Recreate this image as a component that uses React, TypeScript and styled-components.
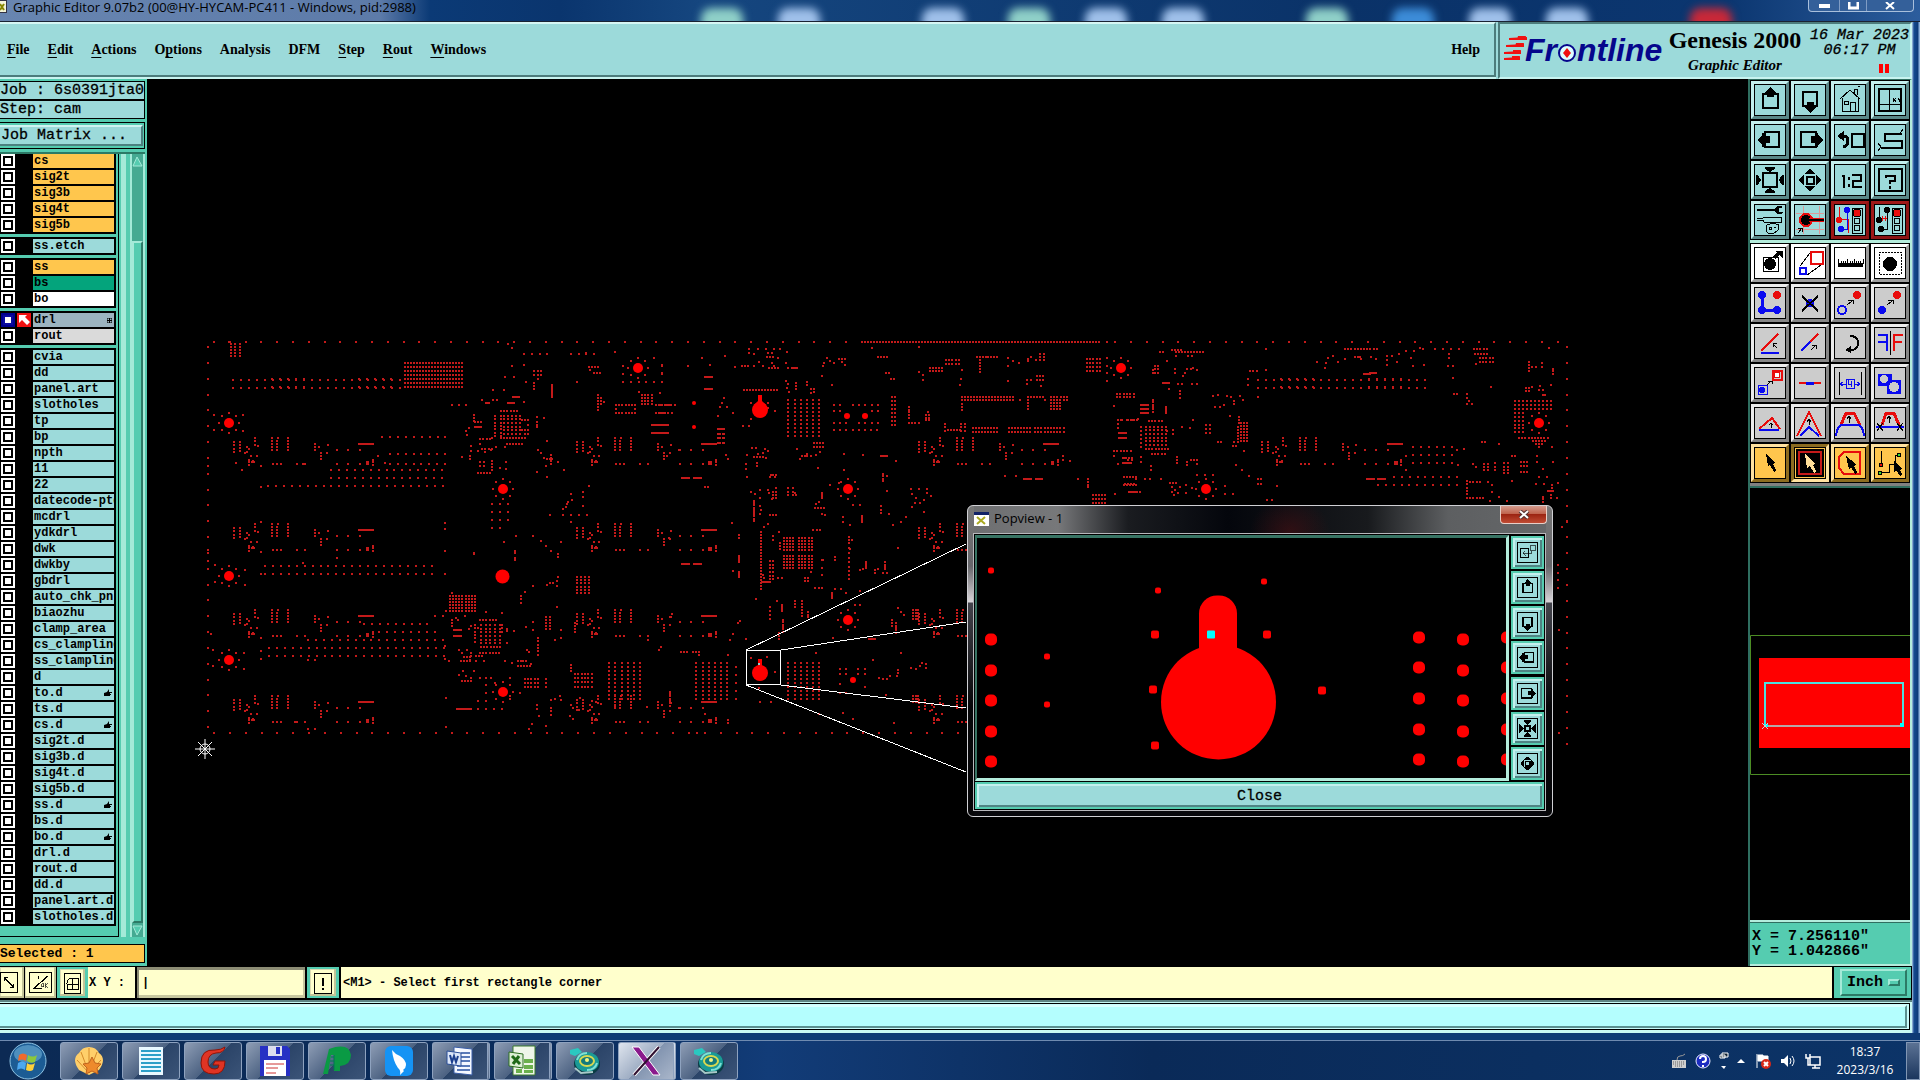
import React from 'react';
import styled, { createGlobalStyle, css } from 'styled-components';

const mono = '"Liberation Mono", "DejaVu Sans Mono", monospace';
const serif = '"Liberation Serif", "DejaVu Serif", serif';
const sans = '"Open Sans", "Noto Sans", sans-serif';

const aqua = '#9cdada';
const teal = '#55ccb0';
const amber = '#ffc64d';
const cream = '#ffffcc';
const grey = '#cccccc';

const Global = createGlobalStyle`
  * { box-sizing: border-box; }
  body { margin: 0; background: #0a3468; overflow: hidden; }
  button, input, select { font: inherit; color: inherit; margin: 0; padding: 0; border: 0; border-radius: 0; }
  svg { display: block; }
`;

/* ---------- drill data ---------- */

/* Each entry is "x,y" for one hit or "x,y,columns,rows,dx,dy" for an array. */
const EDGE = `72,36,41,1,47.4,0 2016,36,80,1,9,0 2751,36 2775,36 2823,36,28,1,47.4,0 54,51,1,25,0,47.5
54,408 54,432 54,660 54,692 72,1209,60,1,47.5,0 4131,51,1,26,0,47.6 4131,573 4116,591 4104,705,1,4,0,23 4107,900 4107,1209`;

const LEFT = `123,42,3,5,13,9 117,36 645,99,20,7,9,12 129,150,22,2,23.8,24 247,147,5,2,24,24 508,147,5,2,24,24 786,225,3,1,21,0
576,321,9,1,23.8,0 585,399 600,372,8,1,23.6,0 600,402,8,1,23.6,0 423,420,15,2,23.8,24 213,470 234,468,23,1,23.8,0
765,579 765,596 765,663 765,732 225,708,22,1,23.8,0 213,732 225,732,22,1,23.8,0 339,699 213,576 213,666 213,408
780,798,9,6,9.3,9 786,790 522,882,9,1,23.8,0 567,906,8,1,23.8,0 354,930,18,1,23.8,0 237,954,23,2,23.8,24
735,858 759,858 213,963 213,987 354,990 375,990 63,912 765,948 765,987 777,993 768,1104 768,1191 213,924
933,243,6,1,9.5,0 915,258,1,7,0,10 933,258,1,7,0,10 942,257,5,6,12,11 933,324,9,1,9,0 951,342,6,1,9,0 996,270,3,1,9,0 1014,285 996,300,3,1,9,0 1005,312,2,1,9,0
852,255,1,3,0,9 855,276,3,1,9,0 855,291,4,1,6,0 876,210 888,218,3,1,5,0 909,210 921,210 909,180 942,180 969,201,4,1,6,0 954,218,4,1,6,0 1002,216
945,141 972,141 966,108 1002,105 954,42 972,36 966,54 1003,72,4,1,23,0 1143,72,4,1,23,0 1188,70 1275,66 1161,156 1033,123,3,2,10,11 1033,159,1,3,0,9 1008,156 1045,147 1086,165,1,7,0,6
1197,111,4,1,9,0 1200,120 1212,129,3,1,9,0 1299,108,1,3,0,24 1323,156,5,1,23,0 1416,108,1,2,0,24 1392,84
1224,195,1,6,0,9 1233,204,1,3,0,9 1242,216 1278,225,7,1,9.5,0 1278,249,7,1,9.5,0 1278,237 1335,237 1356,195,4,4,9.5,9 1347,186 1410,188
1398,225,6,1,9,0 1398,249,4,1,9,0 1386,285,9,1,6,0 1386,309,9,1,6,0 1041,261 1062,264 1041,276,1,3,0,8 837,294 828,303 830,315
870,327,4,1,10,0 906,324 870,342 843,348,1,2,0,14 840,378,1,2,0,10 816,381 864,363 876,357,4,1,10,0 885,366 903,360 918,351 945,350 960,342
870,396,2,2,12,12 906,393,1,4,0,9 864,429,5,1,9,0 948,396 930,414 948,417 1071,333 1044,360 1053,369 1062,384 1071,387,3,1,8,0 1083,375,1,4,0,9 1104,396 1122,420 1041,426 1071,441 1068,408
906,522,3,3,24,24 906,594 930,594 1197,468 1179,486 1179,501 1179,528 1143,492 1146,510 1134,516 1131,522 1128,531 1119,537 1119,555,4,1,24,0 1080,555 1143,576
978,618 1029,618 942,636 1053,633 1068,648 1083,663 1104,672 1104,681 1113,636 852,672 852,668 975,663,1,2,0,6 975,684,1,2,0,6 1161,741,4,6,12,9.6
1029,768 1005,786 993,798,1,3,0,10 1071,765 1080,759 1089,759 1101,768 1104,741 1101,754 1101,831
870,870,6,1,9.5,0 855,885,1,6,0,10 864,894 873,885,5,6,14,11 873,951,7,1,9.5,0 870,969,7,1,9.5,0 936,885,1,3,0,10 951,897 951,903 972,903 843,888 837,897 951,939
792,900,5,2,5,18 786,870,1,3,0,9 804,870 825,858 798,864 888,846 936,849 768,843 807,960 831,960 816,970 822,980,3,1,9,0 813,993,4,1,9,0 843,970,1,2,0,9 858,978,3,1,9,0
840,990 858,993 882,993 945,993 966,999 1011,960 1017,966 984,993,4,1,8,0 984,1008,5,1,9,0 1023,1002 852,1023 819,1023 807,1035 828,1038 816,1052,4,1,9,0 843,1044 870,1044,3,1,17,0 960,1044 915,1059
1008,891 1029,876 1029,900 1068,861,2,5,12,9 1044,924,1,6,0,10 1095,930 1113,900 1113,924 1155,879,1,4,0,9 1005,1047,5,3,9.5,12 1068,1047,1,3,0,12 1155,1032,6,4,10,12.5 1143,1005,1,3,0,9
1257,1000,2,10,18,12 1296,1000,4,10,18,12 888,1065 888,1089 960,1098 990,1089 864,1113 888,1113 801,1137,8,1,6,0 864,1137,4,1,24,0 1041,1125 1041,1138 1047,1158 1083,1110 1095,1107 1110,1098 1113,1110 1083,1134,1,3,0,10 1068,1188 1017,1196 1026,1182 1023,1209
1143,1125 1149,1134 1140,1158 1149,1166 1170,1104 1161,1118 1167,1140 1206,1114 1218,1116 354,1197 375,1197 357,1209 339,402 138,399 156,420 564,378 441,684 315,1176 1371,1131 1275,1131 1374,930 1408,960 1414,950`;

const MIDDLE = `126,84 84,108 150,105 195,78 136,141,5,1,5,0 136,177,5,1,5,0 192,204 225,111 246,108,3,1,9,0 267,58 294,58 267,70 282,72 297,96 282,108 309,108 318,57 342,57 324,70 336,70 321,81,3,1,9,0
354,84 336,99 342,108 327,114,4,1,9,0 381,66 360,58 378,100 384,114 396,114,5,1,4,0 252,180,12,1,9,0 378,153 384,162 381,174 387,186 408,160,1,3,0,9 441,156,1,2,0,9 453,177 462,177 453,189 462,186 486,138 516,165
384,210,2,10,21,12 423,210,4,10,18,12 384,1000,2,10,21,12 423,1000,4,10,18,12 108,1000,2,10,21,12 147,1000,4,10,18,12 228,1010,1,5,0,24
180,230 186,220 201,230 174,258 219,249 249,288 267,288 345,243 174,297,4,1,6,0 174,312,2,3,14,13 179,312,2,3,14,13 0,249,4,1,12,0 3,225,4,1,14,0 6,104 6,130 6,156 0,189
522,225,2,2,18,18 579,225,5,1,18.5,0 522,300,8,1,18.5,0 522,279,3,1,18.5,0 597,279,4,1,19,0 636,243 654,243 696,201,2,8,10,12 747,231,1,5,0,8 747,279,4,1,9.5,0 798,255,2,3,9,8 804,246
501,84 510,93 489,108 492,98 522,100 537,87,3,1,9,0 546,97 555,105 636,54 777,51 654,81,4,1,9,0 678,129 687,129 693,147 702,147 810,114,5,1,9,0 810,122,5,1,9,0 858,90,5,2,9.5,12 777,126 789,135 789,150 900,165 903,147 906,120
951,81,8,1,8.5,0 960,90,1,5,0,9 1044,84 1059,93 1077,99 1044,108 1044,153 1104,87 1113,81 1104,93 1140,72,2,3,12,9 1128,90 1131,138,3,2,9,12 1101,150 1101,162 1113,150 1143,168 1281,87,5,4,9.5,12 1341,84,1,4,0,23
906,201,18,1,9,0 906,210,18,1,9,0 906,222,1,3,0,9 1080,210 1104,201,5,1,9,0 1104,210,1,4,0,9 1149,201 1155,210 1173,201,6,1,9.5,0 1173,210,4,4,9,9 1212,210 1221,210
855,282,1,3,0,10 864,300,5,1,9,0 903,282,2,3,12,10 939,294,9,2,9,11 1047,294,8,2,9,11 1125,294,10,2,9.5,11 1371,192,6,2,10,9 1362,228 1375,270 1387,270 1405,270,4,1,9,0 1375,282,1,2,0,12 1377,309,4,2,6,14 1362,363,6,1,10,0 1389,399,6,1,5,0
1362,378 1374,402 1395,384 1404,390 1392,441,5,1,9,0 1395,462,4,1,9,0 1408,486,4,1,6,0 1284,448,1,4,0,8 1254,447 1092,447,5,1,5,0 1128,447,4,1,6,0 1035,438 1068,438 1299,494,5,3,9,12 1365,492 1230,393 1209,378 1209,390
462,340,4,2,9,10 426,378,3,1,8,0 411,357 420,387 441,372 453,378 468,375 480,366 276,354 288,354 315,357 324,363 261,375 282,382,4,1,9,0 294,372 309,370 318,385 291,399,1,2,0,8 258,402,1,2,0,14 261,441 330,440 339,436 348,436 333,435 345,440
552,372 609,375 663,378,4,1,6,0 708,393 474,414 552,420 669,432,1,4,0,7 681,438 681,483 663,528,1,3,0,11 687,552 699,585 723,576 738,561 753,478 777,478 801,478 756,492 768,504 792,510 765,520 780,520 756,532 792,545 801,488 813,498
273,486 285,492 300,480 324,480 327,490 339,486,2,3,9,9 384,475,2,3,15,10 405,490 300,505 336,508 282,513,1,10,0,6.6 300,528 303,540 300,552 330,555,3,1,9,0 348,475 408,496 486,490,1,4,0,5 468,522 477,516 466,534,4,1,9,0 486,552 495,555 510,465 537,459 579,525 600,525
549,560 549,576 570,585 606,558,1,4,0,6 216,579 303,605,1,20,0,9 312,590 324,582 237,615,1,2,0,9 237,678,1,4,0,6 237,725,1,4,0,5 219,723
372,624,4,5,9,9 360,640,1,3,0,9 417,624,5,5,9.5,9 372,678,4,5,9,9 417,678,5,5,9.5,9 339,618,1,2,0,11 357,606 330,693,2,6,9,11 309,735 312,745 306,755,5,1,6,0 354,745 366,745 435,744,2,2,10,9 453,725 486,690 490,690 486,715 486,735 525,680,1,2,0,9 460,600,3,1,10,0 466,773,3,1,10,0
567,620,1,3,0,9 576,630 567,655,1,4,0,14 570,657 567,711,1,4,0,12 600,720 618,697,1,4,0,6 609,717 645,720,1,2,0,8 654,718 675,697,1,4,0,7 680,728 669,728 714,654 516,790,1,4,0,5 525,777 543,777 558,790 600,783 585,825 600,825 288,807
330,832,1,4,0,12 366,825,1,4,0,6 351,813 405,813,1,3,0,9 426,813,1,6,0,9 444,846,1,3,0,8 369,870,1,6,0,7 357,910,1,3,0,9 759,840,3,4,8,9 714,834 723,846 732,855 696,870,1,3,0,9 708,880,1,5,0,7
627,927,4,1,6,0 519,924 468,969 723,969 639,990 678,1095 540,1018,2,2,18,15 594,1018,2,2,20,15 540,1063 540,1090 558,1090 615,1072 657,1044 669,1046 681,1046 690,1038 711,1038 714,1020 714,1030 753,1015 768,1018 780,1009 786,1000 798,1003 798,1015
759,1098,3,3,8,9 273,984 321,980 345,1026 297,1074 300,1116 333,1116 477,1152 549,1150 579,1167 702,1179 204,1170 204,1179 30,1085,1,7,0,7 63,967,3,1,9,0 99,967,3,1,9,0 117,975 66,702,5,1,5,0 102,702,5,1,5,0 66,444,5,1,5,0 102,444,5,1,5,0 135,471 144,471
33,345 57,360 21,378 198,375 204,388 33,603 27,624 36,852 30,862 240,873 234,879 210,930 258,927 204,975 219,912 57,1134 135,1152 87,1209 111,1209 135,1209 273,218 324,220 273,266 324,234`;

const RIGHT = `120,66 129,66 156,60,4,1,9,0 168,66,10,1,9,0 204,78 216,78 168,78 141,93 165,117,1,2,0,12 201,117 213,117 195,129 189,138 231,120 219,114 99,120 99,129 105,108,2,3,10,10 129,159,4,1,6,0 147,177 174,162 186,162 216,162 231,162 180,183,1,3,0,10
63,225,5,3,5,12 99,210,1,6,0,7 138,231,1,4,0,6 4,270,4,1,16,0 54,267 0,309,4,2,6,14 87,273,5,1,9.5,0 63,290,1,6,0,12 78,290,6,6,12,11 78,357,8,1,9.5,0 96,372,5,1,9.5,0 141,302 159,300 159,312 186,291 210,294 219,270
258,285,2,3,12,12 294,336 303,336 330,258 357,262,1,3,0,9 363,280,3,7,9,9 354,290,1,6,0,9 342,336 340,348 349,348 372,363 279,198 294,195 285,231 300,231 321,198 333,201 342,213 342,222 360,198 369,210 312,225
390,123,3,1,10,0 438,120 384,147 384,165 438,57 414,150,22,2,23.8,24 484,147,5,2,24,24 746,147,5,2,24,24 414,201 675,57,11,1,9.5,0 591,96 615,114 618,100 624,84 639,78 654,96 675,87 705,81,3,1,8,0 723,87 753,81 768,87 732,132,4,1,6,0 750,129,4,1,6,0
801,78 801,90 801,105 816,78 837,72 831,96 858,62 883,62 900,54 909,57 873,84 879,108 912,105 946,58,4,1,23.5,0 987,72 987,85 985,107 1000,107 999,144 1062,57,5,1,9.5,0 1065,72,5,1,9,0 1080,84,5,2,9.5,11 1068,102 1113,171 1002,192,2,1,9,0 1040,192 1040,203 1048,213 1040,223 1057,221
1227,96,1,4,0,9 1236,110 1248,110 1266,100 1266,110 1299,117,1,3,0,7 1287,54 1293,165 1218,175,2,2,9,9 1236,172 1260,168 1257,180 1268,180 1269,195,2,1,6,0 1185,213,10,3,12,12 1185,249,3,6,12,11.5 1197,324,10,1,9.5,0 1240,333,5,1,9,0 1248,342,3,1,9,0 1257,351 1296,351
879,351,6,3,23.6,24 1011,360 1032,357 1014,405 1137,342 1086,336 1095,336 822,441,9,1,23.6,0 774,465,11,1,23.6,0 741,447,5,1,5,0 774,447,5,1,5,0 858,378 858,420 1059,402 1068,410 1092,402,2,3,12,9 1125,400,1,3,0,10 1152,400,2,4,12,10 1176,378 1185,378
1203,396,3,2,9,12 1203,426,3,1,9,0 1176,453 1251,378 1251,396 1299,396 1269,417 1041,453,1,6,0,10 1050,456,4,1,10,0 1050,504,5,1,10,0 1104,456 1116,465 1116,486 1110,512 1137,500 1161,513 1257,441 1281,441 1248,462 1272,462 1296,465,1,2,0,9 1284,483,4,1,5,0 1314,459 1293,495,1,2,0,8 1269,500,1,3,0,8 1311,504
348,405 366,420 387,438 414,447,2,2,9,14 471,468 441,510 456,510 315,468 315,492 339,492 150,459,3,1,9,0 156,470 165,480 174,490 156,486 162,495 180,470 198,465 216,474 198,489 231,435 254,435 279,435
9,384,4,1,9,0 9,399,5,1,6,0 36,390 63,381 63,396 12,441,4,1,9,0 12,465,5,1,9,0 27,486,5,1,8,0 48,447 75,447 90,447 123,447 93,408 93,420 171,380,1,3,0,10 201,395 201,405 213,390,3,1,9,0 231,402`;

/* The component pattern that is stepped over the panel. */
const MODULE = `132,14,1,4,0,10 150,14,1,4,0,9 172,30,1,2,0,14 165,48 178,35 195,3,1,2,0,9 195,23 204,27 200,56 183,56 177,68,1,3,0,7 186,74,2,1,6,0 190,70
246,2,1,5,0,9 261,10,1,4,0,9 264,2 294,2,1,5,0,9 249,80,3,1,12,0 375,20,1,3,0,9 388,30 393,48,1,3,0,9 414,23 411,47 441,38 474,38 510,38 508,20,8,1,6,0 321,80 345,80 441,80 474,80 510,80 549,68,1,3,0,7 530,74,2,2,5,5 533,76`;

function hits(list: string, ox = 0, oy = 0): string {
  let d = '';
  list.trim().split(/\s+/).forEach((entry) => {
    const [x, y, nx = 1, ny = 1, dx = 0, dy = 0] = entry.split(',').map(Number);
    for (let i = 0; i < nx; i += 1) {
      for (let j = 0; j < ny; j += 1) {
        const px = Math.round((x + ox + i * dx) / 3) - 1;
        const py = Math.round((y + oy + j * dy) / 3) - 1;
        d += `M${px} ${py}h2v2h-2z`;
      }
    }
  });
  return d;
}

const modules = [0, 1028, 2055, 3085]
  .map((ox) => [322, 580, 838, 1096].map((oy) => hits(MODULE, ox, oy)).join(''))
  .join('');
const drillPath = hits(EDGE) + hits(LEFT) + hits(MIDDLE, 1410) + hits(RIGHT, 2790) + modules;

const tooling = [
  [39, 93, 5], [39, 246, 5], [39, 330, 5], [313, 159, 5], [313, 362, 5], [448, 38, 5],
  [658, 159, 5], [658, 290, 5], [931, 38, 5], [1016, 159, 5], [1349, 93, 5],
];
const ringOffsets = [[-10, 0], [10, 0], [0, -10], [0, 10], [-7, -7], [7, -7], [-7, 7], [7, 7]];

function Board() {
  return (
    <svg width="100%" height="100%" viewBox="147 79 1601 887" preserveAspectRatio="xMidYMid meet" aria-label="Drill layer">
      <g transform="translate(190 330)">
        <path d={drillPath} fill="#c41a1a" shapeRendering="crispEdges" />
        {tooling.map(([x, y, r]) => (
          <g key={`${x}-${y}`}>
            <circle cx={x} cy={y} r={r} fill="#f00" />
            {ringOffsets.map(([a, b]) => (
              <rect key={`${a}${b}`} x={x + a - 1} y={y + b - 1} width="2" height="2" fill="#c41a1a" shapeRendering="crispEdges" />
            ))}
          </g>
        ))}
        <path d="M23 84h2v2h-2zM52 84h2v2h-2zM23 99h2v2h-2zM52 100h2v2h-2zM24 234h2v2h-2zM54 239h2v2h-2zM24 251h2v2h-2zM54 254h2v2h-2zM22 319h2v2h-2zM53 322h2v2h-2zM22 335h2v2h-2zM53 338h2v2h-2z" fill="#c41a1a" />
        <g fill="#f00">
          <circle cx="312.500" cy="246.500" r="7" />
          <circle cx="570" cy="80" r="8" />
          <path d="M568 65h4v6l4 4h-12l4-4z" />
          <circle cx="570" cy="343" r="8" />
          <rect x="568" y="329" width="4" height="9" />
          <circle cx="657" cy="86" r="3" />
          <circle cx="675" cy="86" r="3" />
          <circle cx="663" cy="350" r="3" />
          <circle cx="504" cy="73" r="2" />
          <circle cx="504" cy="97" r="2" />
        </g>
        <rect x="568" y="333" width="2" height="2" fill="#9cc" />
      </g>
      <g fill="none" stroke="#fff" shapeRendering="crispEdges">
        <rect x="746.500" y="650.500" width="34" height="34" />
        <path d="M746 650L966 544M781 650L966 622M781 685L966 708M746 685L966 772" />
      </g>
      <g fill="none" stroke="#fff">
        <path d="M195 749h20M205 739v20M198 742l14 14M212 742l-14 14" />
        <circle cx="205" cy="749" r="5" />
      </g>
    </svg>
  );
}

/* ---------- toolbar glyphs, each on a 30 x 30 field ---------- */

const K = '#000';
const R = '#e80c0c';
const B = '#0a0af0';
const sq = (x: number, y: number, w: number, h: number, c = K, s = 2) => (
  <rect x={x} y={y} width={w} height={h} fill="none" stroke={c} strokeWidth={s} />
);
const ln = (d: string, c = K, s = 1) => <path d={d} fill="none" stroke={c} strokeWidth={s} />;
const fl = (d: string, c = K) => <path d={d} fill={c} />;

const glyphs: Record<string, React.ReactNode> = {
  panUp: <>{sq(8, 9, 15, 14)}{fl('M15 2l6 6h-2v4h-7V8h-2z')}</>,
  panDown: <>{sq(8, 7, 14, 14)}{fl('M12 17h7v5h2l-6 6-6-6h3z')}</>,
  home: <>{ln('M5 14L15 5l10 9M7 13v13h16V13M9 16h4v3H9zM15 26v-9h5v9M19 8V4h3v6M23 2l2-1')}</>,
  zones: <>{sq(4, 4, 22, 22)}{ln('M14 4v22M4 19h22')}{ln('M18 13l3 4M21 13l-3 4M23 13l1 2 2-2M24 15v2')}</>,
  panLeft: <>{sq(10, 7, 14, 15)}{fl('M2 15l5-5V8h2v3h6v7H9v4H7v-2z')}</>,
  panRight: <>{sq(6, 7, 15, 15)}{fl('M28 15l-5-5V8h-2v3h-5v7h5v4h2v-2z')}</>,
  back: <>{sq(17, 9, 12, 13)}{ln('M4 11h4q5 0 5 5t-5 6', K, 3)}{fl('M2 11l7-5v10z')}</>,
  snake: <>{ln('M27 9H10v7h17v7H6', K, 2)}{ln('M25 9l3-5M3 18l3 4-3 4')}</>,
  fit: <>{sq(8, 8, 14, 14)}{fl('M15 7l-5-3V2h10v2zM15 23l-5 3v2h10v-2zM1 10h2l3 5-3 5H1zM29 10h-2l-3 5 3 5h2z')}</>,
  expand: <>{sq(12, 12, 7, 7)}{fl('M15 4l5 4v1H10V8zM15 26l5-4v-1H10v1zM4 15l4-5h1v10H8zM26 15l-4-5h-1v10h1z')}</>,
  shrink: <>{sq(11, 11, 8, 8)}{fl('M15 9L9 3V2h12v1zM15 21l-6 6v1h12v-1zM9 15L3 8H2v14h1zM21 15l6-7h1v14h-1z')}</>,
  scale: <>{ln('M7 11h2v12M14 12v3M14 19v3M17 10h9v6h-8v6h9', K, 2)}</>,
  help: <>{sq(4, 4, 23, 22)}{ln('M11 13v-2h9v5h-5v3M15 21v3', K, 2)}</>,
  tools: <>{fl('M2 4h17l4-3h4v2h-3v4h4l-2 2h-3l-4-3H2z')}{ln('M2 13h6l1-1h17v5H9l-1-2H2')}{ln('M12 20q6-3 12 0l-1 5-5 4q-7 0-7-4zM14 22h2v2h-2zM19 22h2')}</>,
  snap: <>{ln('M1 8h28M1 24h28M8 1v28M24 1v28', '#d99')}<circle cx="11" cy="15" r="7" fill={R} /><circle cx="11" cy="15" r="5" />{fl('M14 13h15v4H14z', R)}{fl('M14 14h15v2H14z')}{ln('M3 28l4-5M3 23h4v4')}</>,
  netA: <>{ln('M1 14h12v14M4 2v12M12 5v8', R)}{ln('M12 5v19H6', B)}<circle cx="4" cy="15" r="3" fill={R} /><circle cx="12" cy="5" r="3" fill={B} /><circle cx="6" cy="24" r="3" fill={B} />{sq(17, 3, 10, 25, K, 1)}<circle cx="22" cy="8" r="4" fill={R} stroke={K} /><circle cx="22" cy="16" r="3" fill="none" stroke={K} /><circle cx="22" cy="23" r="3" fill="none" stroke={K} /></>,
  netB: <>{ln('M4 2v12M12 5v19H6')}{ln('M6 13h6M7 11v5M10 11v5', R)}<circle cx="4" cy="15" r="3" /><circle cx="12" cy="5" r="3" /><circle cx="6" cy="24" r="3" />{sq(17, 3, 10, 25, K, 1)}<circle cx="22" cy="8" r="4" fill={R} stroke={K} /><circle cx="22" cy="16" r="3" fill="none" stroke={K} /><circle cx="22" cy="23" r="3" fill="none" stroke={K} /></>,
  addPad: <>{sq(8, 9, 15, 14, K, 1)}<circle cx="15" cy="16" r="6" />{ln('M19 10l5-5', K, 3)}{fl('M20 3h8v8z')}</>,
  copyShape: <>{sq(16, 4, 12, 12, R)}{sq(5, 20, 6, 6, B)}{ln('M5 18L15 5M12 27l14-10', K)}</>,
  ruler: <>{fl('M3 15h25v4H3z')}{ln('M3 11v5M6 13v3M8 13v3M10 13v3M12 11v5M15 13v3M17 13v3M19 11v5M21 13v3M23 13v3M25 13v3M28 11v5')}</>,
  area: <><rect x="4" y="4" width="22" height="22" fill="none" stroke={K} strokeDasharray="2 1" /><circle cx="15" cy="16" r="7" /></>,
  chain: <>{ln('M7 7v15h15', B, 3)}<circle cx="7" cy="7" r="4" fill={B} /><circle cx="7" cy="22" r="4" fill={B} /><circle cx="22" cy="22" r="4" fill={B} /><circle cx="22" cy="7" r="4" fill={R} /></>,
  erase: <><circle cx="15" cy="15" r="4" fill={B} />{ln('M7 8l16 15M23 8L7 23', K, 2)}</>,
  moveRing: <><circle cx="22" cy="7" r="4" fill={R} /><circle cx="7" cy="22" r="4" fill="none" stroke={B} strokeWidth="2" />{ln('M12 17l5-4M13 12h5v4')}</>,
  moveDot: <><circle cx="22" cy="7" r="4" fill={R} /><circle cx="7" cy="22" r="4" fill={B} />{ln('M12 17l5-4M13 12h5v4')}</>,
  angle: <>{ln('M6 23L23 6', R, 2)}{ln('M6 25h18', B, 2)}{ln('M22 20l-4-4M18 19v-4h4')}</>,
  extend: <>{ln('M15 14l8-8', R, 2)}{ln('M6 23l9-9', B, 2)}{ln('M16 22l5-5M17 17h4v4')}</>,
  rotate: <>{ln('M15 8q8 0 8 7t-9 8', K, 2)}{fl('M10 22l6-4v7z')}</>,
  mirror: <>{ln('M3 7h9v16M3 14h9', B, 2)}{ln('M15 3v24')}{ln('M28 7h-9v16M27 14h-8', R, 2)}</>,
  transfer: <>{sq(18, 3, 9, 9, R)}<circle cx="22" cy="7" r="3" fill="#fff" stroke={R} />{sq(3, 17, 9, 9, B, 1)}<circle cx="7" cy="22" r="3" fill={B} />{ln('M12 17l4-4M13 13h4v3')}</>,
  trim: <>{ln('M4 15h8M18 15h8', R, 2)}{ln('M11 15h8', B, 3)}</>,
  gap: <>{ln('M4 4v23M26 4v23')}{ln('M6 16h5M19 16h5M8 14l-3 2 3 2M22 14l3 2-3 2M11 11h8v9h-8zM13 12v4h4M16 13v6', B)}</>,
  merge: <>{fl('M3 6h14v6h9v14H12v-8H3z', B)}<circle cx="9" cy="11" r="4" fill="#ccc" /><circle cx="19" cy="19" r="5" fill="#ccc" /></>,
  peakA: <>{ln('M4 21L17 10l8 11', R, 2)}{ln('M4 22h20', B, 2)}{ln('M16 20v-4M14 17l2-2 2 2')}</>,
  peakB: <>{ln('M2 28L14 4l12 24', R, 2)}{ln('M5 28l9-9 10 9', B, 2)}{ln('M14 17v-5M12 14l2-3 2 3')}</>,
  peakC: <>{ln('M6 17l5-12h8l6 12', R, 3)}{ln('M1 28q1-9 5-11h18q4 2 5 11', B, 2)}{ln('M14 15V9M12 11l2-3 2 3')}</>,
  peakD: <>{ln('M7 17l4-12h8l5 12', R, 3)}{ln('M1 19h28', B, 2)}{ln('M14 15V9M12 11l2-3 2 3M2 15l6 8M8 15l-6 8M22 15l6 8M28 15l-6 8')}</>,
  pick: fl('M11 6l9 8-2 2 3 6-2 2-4-7-2 1z'),
  pickBox: <><rect x="1" y="1" width="28" height="28" fill={K} />{sq(4, 4, 22, 22, '#c41a1a')}{fl('M10 6l10 9-2 2 3 6-2 2-4-7-3 2z', '#ffdf9a')}</>,
  pickPoly: <>{ln('M9 4h16v22H9l-5-6V9z', R, 2)}{fl('M11 8l10 8-2 2 3 6-2 2-4-7-2 2z')}</>,
  pickNet: <>{ln('M6 3v13M6 24h8v-8h6V7h4')}<circle cx="6" cy="17" r="2" fill={R} stroke={K} /><circle cx="5" cy="25" r="2" fill="#3d3" stroke={K} /><circle cx="24" cy="7" r="2" fill="#3d3" stroke={K} />{fl('M19 13l8 7-2 2 2 4-2 2-4-6-2 2z')}</>,
  popTo: <>{sq(4, 9, 13, 14)}{sq(19, 4, 8, 8, K, 1)}{ln('M8 16h14v-4M12 12l-4 4 4 4')}</>,
  diag: <>{ln('M6 6l18 18M6 13V6h8M24 17v7h-8', K, 2)}</>,
  slope: <>{ln('M4 25L26 5M4 25h14M12 4v6', K, 2)}{ln('M17 17h3v5h-3zM23 16v7M27 16l-4 4 4 4')}</>,
  grid: <>{ln('M15 4q-11 0-11 11v11h22V4zM15 4v22M4 16h22', K, 2)}</>,
  bang: <>{ln('M15 4v16M15 23v4', K, 3)}</>,
};

const Glyph = ({ name }: { name: string }) => (
  <svg width="100%" height="100%" viewBox="0 0 30 30" shapeRendering="crispEdges" aria-hidden="true">{glyphs[name]}</svg>
);

/* ---------- frame ---------- */

const Screen = styled.div`
  display: flex; flex-direction: column; height: 100vh; color: #000;
  background: #0b3466; font-family: ${mono};
`;
const AppWindow = styled.main`
  flex: 1; min-height: 0; display: flex; flex-direction: column;
  padding-right: 8px; border-bottom: 7px solid #0e3a75;
  background: linear-gradient(90deg, #0c3b78 calc(100% - 8px), #a9c4e4 calc(100% - 8px), #154a90 calc(100% - 6px), #0d3a78 calc(100% - 2px), #8fb2dc calc(100% - 1px));
`;
const TitleBar = styled.header`
  position: relative; flex: none; height: 22px; margin-right: -8px; padding-right: 6px;
  display: flex; align-items: flex-start; gap: 6px; overflow: hidden;
  border-bottom: 1px solid #1a2233;
  background: linear-gradient(90deg, #6885b0 0, #5d7ba9 380px, #0b3a76 430px, #0a356e 560px, #15467f 700px, #0a3268 70%, #0b3670 90%, #2c5d9d);
  font: 13px/14px ${sans};
`;
const Blur = styled.i<{ $x: number; $c: string }>`
  position: absolute; left: ${(p) => p.$x}%; top: 8px; width: 42px; height: 22px;
  border-radius: 10px 10px 0 0; background: ${(p) => p.$c}; filter: blur(4px);
`;
const Caption = styled.h1`margin: 0; font: inherit;`;
const MiniX = styled.span`
  width: 7px; height: 13px; border: 1px solid #334; border-left: 0; background: #f4f4d8; color: #880;
`;
const Controls = styled.div`
  margin-left: auto; display: flex; height: 12px; position: relative;
  border: 1px solid #a8bfdc; border-top: 0; border-radius: 0 0 4px 4px; background: #34609a;
`;
const Control = styled.button<{ $w: number }>`
  width: ${(p) => p.$w}px; display: grid; place-items: center; background: transparent; color: #fff;
  border-left: 1px solid #7f9cc4;
  &:first-child { border-left: 0; }
`;
const Header = styled.div`flex: none; height: 57px; display: flex; background: ${aqua};`;
const sunken = css`border: 2px solid; border-color: #4c7c7c #c8f4f0 #c8f4f0 #4c7c7c;`;
const MenuBar = styled.nav`
  flex: 1; display: flex; align-items: center; gap: 18px; padding: 0 14px 0 7px; background: ${aqua};
  border: solid; border-width: 2px 2px 2px 0; border-color: #d6f6f4 #4c7c7c #4c7c7c; box-shadow: 0 2px #c8f4f0;
  margin-bottom: 2px; font: bold 14px/20px ${serif};
  button { background: transparent; }
  button:last-child { margin-left: auto; }
  u { text-underline-offset: 3px; }
`;
const Brand = styled.div`
  flex: none; width: 414px; margin-left: 2px; padding: 2px 1px 2px 4px; display: flex; justify-content: space-between;
  background: ${aqua}; ${sunken}
  svg { overflow: visible; }
`;
const Product = styled.div`
  text-align: center; font-family: ${serif}; font-weight: bold;
  strong { display: block; font-size: 24px; line-height: 28px; }
  em { display: block; font-size: 15px; line-height: 22px; }
`;
const Clock = styled.time`
  position: relative; display: block; padding-top: 2px; text-align: center; font: italic 15px/15px ${mono}; -webkit-text-stroke: 0.3px #000;
`;
const Pause = styled.span`
  display: block; width: 10px; height: 9px; margin: 6px 20px 0 auto;
  border: solid red; border-width: 0 4px;
`;
const Work = styled.div`flex: 1; min-height: 0; display: flex; background: #000;`;

/* ---------- layer list ---------- */

const Side = styled.aside`
  flex: none; width: 147px; display: flex; flex-direction: column; padding: 2px 2px 3px 0;
  background: ${teal}; font-size: 15px; line-height: 17px; overflow: hidden;
`;
const Info = styled.div`
  height: 19px; border: 1px solid #000; border-left: 0; background: ${aqua}; white-space: nowrap;
  -webkit-text-stroke: 0.3px #000;
`;
const MatrixFrame = styled.div`margin: 3px 0; height: 27px; padding: 2px 1px 2px 0; border: 1px solid #000; border-left: 0;`;
const MatrixButton = styled.button`
  width: 100%; height: 100%; padding-left: 1px; text-align: left; background: ${aqua}; border: 2px solid; border-left: 0;
  border-color: #d0f4f2 #4c8080 #4c8080; -webkit-text-stroke: 0.3px #000;
`;
const ListArea = styled.div`flex: 1; min-height: 0; display: flex; border-top: 2px solid #2c7a66; overflow: hidden;`;
const Layers = styled.ul`
  flex: none; width: 119px; margin: 0; padding: 0; list-style: none; border-right: 1px solid #000; border-bottom: 1px solid #000;
  overflow: hidden; font: bold 12px/14px ${mono};
`;
const LayerRow = styled.li<{ $gap?: boolean }>`
  display: flex; width: 116px; height: ${(p) => (p.$gap ? 18 : 16)}px; margin-top: ${(p) => (p.$gap ? 3 : 0)}px;
  padding: ${(p) => (p.$gap ? 2 : 0)}px 2px 2px 1px; background: #000;
`;
const Tick = styled.input<{ $on?: boolean }>`
  appearance: none; flex: none; width: 14px; height: 14px; background: #fff;
  box-shadow: inset 0 0 0 2px ${(p) => (p.$on ? '#000090' : '#fff')}, inset 0 0 0 4px ${(p) => (p.$on ? '#0a0aa0' : '#000')};
`;
const Mark = styled.span<{ $on?: boolean }>`
  flex: none; width: 14px; height: 14px; margin: 0 2px; background: ${(p) => (p.$on ? '#f01010' : '#000')};
`;
const LayerName = styled.label<{ $c: string }>`
  flex: 1; min-width: 0; display: flex; justify-content: space-between; align-items: center; height: 14px; padding-left: 1px;
  background: ${(p) => p.$c}; white-space: nowrap; overflow: hidden;
  svg { flex: none; margin-right: 2px; }
`;
const Gutter = styled.div`flex: 1; margin: 0 4px 0 2px; border-left: 3px solid #a4ead8; border-right: 2px solid #a4ead8;`;
const Scroll = styled.div`
  flex: none; width: 15px; display: flex; flex-direction: column; background: #45aa92;
  border: solid; border-width: 0 2px; border-color: #2c7a66 #a4ead8;
`;
const ScrollEnd = styled.button`height: 14px; background: transparent; display: grid; place-items: center;`;
const Thumb = styled.div`
  margin-top: 73px; flex: 1; background: ${teal}; border: 2px solid; border-color: #a4ead8 #2c7a66 #2c7a66 #a4ead8;
`;
const SelectedBar = styled.div`
  margin-top: 7px; height: 19px; background: ${amber}; border: 1px solid #000; border-left: 0; font: bold 13px/17px ${mono};
`;

const aquaLayers = 'cvia dd panel.art slotholes tp bp npth 11 22 datecode-ptd mcdrl ydkdrl dwk dwkby gbdrl auto_chk_pnl biaozhu clamp_area cs_clampline ss_clampline d to.d ts.d cs.d sig2t.d sig3b.d sig4t.d sig5b.d ss.d bs.d bo.d drl.d rout.d dd.d panel.art.d slotholes.d'.split(' ');
type Layer = { name: string; color: string; gap?: boolean };
const layers: Layer[] = [
  ...'cs sig2t sig3b sig4t sig5b'.split(' ').map((name) => ({ name, color: amber })),
  { name: 'ss.etch', color: aqua, gap: true },
  { name: 'ss', color: amber, gap: true },
  { name: 'bs', color: '#04a47c' },
  { name: 'bo', color: '#fff' },
  { name: 'drl', color: '#9cb4c0', gap: true },
  { name: 'rout', color: '#dadada' },
  ...aquaLayers.map((name, i) => ({ name, color: aqua, gap: i === 0 })),
];
const handed = ['to.d', 'cs.d', 'ss.d', 'bo.d'];

const Hand = () => (
  <svg width="8" height="8" viewBox="0 0 8 8" aria-hidden="true"><path d="M0 4l3-1 2-3v3h3v1H6v1h1v1H6v1H3L0 7z" /></svg>
);

/* ---------- canvas and popview ---------- */

const Canvas = styled.section`position: relative; flex: 1; min-width: 0; overflow: hidden; background: #000;`;
const Pop = styled.section`
  position: absolute; left: 820px; top: 426px; width: 586px; height: 312px; padding: 0 6px 5px 5px;
  display: flex; flex-direction: column; border: 1px solid #d0d0d4; border-radius: 6px;
  background:
    linear-gradient(#777 0, #66666a 60px, #d8d4d8 96px, #44444c 97px, #060608 200px) left / 6px 100% no-repeat,
    linear-gradient(#777 0, #66666a 60px, #d8d4d8 96px, #44444c 97px, #060608 200px) right / 6px 100% no-repeat,
    linear-gradient(transparent 40px, #08080c 41px) bottom / 100% 100% no-repeat,
    radial-gradient(ellipse at 322px 26px, #50101488 0, transparent 40px),
    linear-gradient(90deg, #6d6e70, #77787a 90px, #1a1c20 160px, #04060c 260px, #181a1d 400px, #5d5f61 480px, #66686a);
`;
const PopTitle = styled.header`
  flex: none; height: 27px; display: flex; align-items: flex-start; justify-content: space-between;
  h2 { display: flex; align-items: center; gap: 5px; margin: 5px 0 0 1px; font: 13px/15px ${sans}; }
`;
const PopClose = styled.button`
  width: 47px; height: 18px; display: grid; place-items: center; margin-right: -1px;
  border: 1px solid #e8cfc8; border-top: 0; border-radius: 0 0 4px 4px;
  background: linear-gradient(#d49a8c, #c0644e 45%, #9c2412 50%, #c04c34);
`;
const PopBody = styled.div`
  flex: 1; min-height: 0; display: flex; flex-direction: column; gap: 1px; padding: 1px; border: 1px solid #b8b8bc; background: #000;
`;
const PopTop = styled.div`flex: 1; min-height: 0; display: flex; gap: 2px;`;
const PopView = styled.div`
  flex: 1; min-width: 0; border: 3px solid; border-color: #387464 #b4ecdc #b4ecdc #387464; border-left-width: 2px;
`;
const PopTools = styled.div`
  flex: none; width: 33px; display: flex; flex-direction: column; justify-content: space-between; padding: 1px 0;
`;
const PopTool = styled.button`
  height: 33px; padding: 3px; background: ${aqua}; border: 2px solid; border-color: ${teal};
  box-shadow: inset 2px 2px #c4f0ee, inset -2px -2px #4f8484;
  span { display: block; width: 21px; height: 21px; margin: 1px; border: 1px solid #000; }
`;
const PopBottom = styled.button`
  flex: none; height: 27px; padding-top: 2px; background: ${aqua}; border: 2px solid ${teal}; font: 15px/19px ${mono}; -webkit-text-stroke: 0.3px #000;
  box-shadow: inset 2px 2px #c4f0ee, inset -2px -2px #4f8484;
`;

const popHoles = [
  [991, 570, 3], [1158, 590, 3], [1264, 581, 3], [1155, 634, 4], [1267, 634, 4], [1153, 689, 4], [1322, 690, 4], [1155, 745, 4],
  [1047, 656, 3], [1047, 704, 3],
  ...[639, 670, 700, 731, 761].flatMap((y) => [[991, y, 6], [1463, y, 6]]),
  ...[637, 667, 698, 729, 759].flatMap((y) => [[1419, y, 6], [1507, y, 6]]),
];

const XIcon = () => (
  <svg width="15" height="14" viewBox="0 0 15 14" aria-hidden="true">
    <path d="M0 0h15v14H0z" fill="#fff" /><path d="M0 0h15v3H0z" fill="#126" /><path d="M3 5l8 7M11 5l-8 7" stroke="#aa2" strokeWidth="2" />
  </svg>
);

function Popview() {
  return (
    <Pop>
      <PopTitle>
        <h2><XIcon />Popview - 1</h2>
        <PopClose aria-label="Close window">
          <svg width="12" height="9" viewBox="0 0 12 9"><path d="M2 1l8 7M10 1L2 8" stroke="#533" strokeWidth="4" /><path d="M2 1l8 7M10 1L2 8" stroke="#fff" strokeWidth="2" /></svg>
        </PopClose>
      </PopTitle>
      <PopBody>
        <PopTop>
          <PopView>
            <svg width="100%" height="100%" viewBox="977 537 529 241" preserveAspectRatio="xMidYMid slice" aria-label="Magnified drill">
              <g fill="#f00">
                {popHoles.map(([x, y, r]) => (
                  <rect key={`${x}-${y}`} x={x - r} y={y - r} width={r * 2} height={r * 2} rx={r > 4 ? 5 : 2} />
                ))}
                <circle cx="1218.500" cy="701.500" r="57.500" />
                <rect x="1199" y="595" width="38" height="90" rx="18" />
              </g>
              <rect x="1207" y="630" width="8" height="8" rx="1" fill="#0ff" />
            </svg>
          </PopView>
          <PopTools>
            {['popTo', 'panUp', 'panDown', 'panLeft', 'panRight', 'shrink', 'expand'].map((g) => (
              <PopTool key={g} aria-label={g}><span><Glyph name={g} /></span></PopTool>
            ))}
          </PopTools>
        </PopTop>
        <PopBottom>Close</PopBottom>
      </PopBody>
    </Pop>
  );
}

/* ---------- right tools ---------- */

const Tools = styled.aside`
  flex: none; width: 164px; display: flex; flex-direction: column; background: #000;
  border: solid; border-width: 1px 2px 0; border-color: #2f6e60 #b4ecdc #2f6e60 #2f6e60;
`;
const ToolGrid = styled.div<{ $frame: string }>`
  flex: none; display: grid; grid-template-columns: repeat(4, 38px); gap: 2px; padding: 1px;
  border-bottom: 3px solid ${(p) => p.$frame}; justify-content: start;
`;
const shades: Record<string, [string, string, string]> = {
  aqua: [aqua, '#c4f0ee', '#5a8888'],
  red: [aqua, '#a01818', '#8c1414'],
  white: ['#fff', '#fff', '#9c9c9c'],
  grey: [grey, '#ececec', '#868686'],
  amber: [amber, '#ffe2a0', '#8c6c20'],
  picked: [amber, '#8c6c20', '#ffe2a0'],
};
const Tool = styled.button<{ $tone: string }>`
  width: 38px; height: 38px; border: 3px solid; background: ${(p) => shades[p.$tone][0]};
  border-color: ${(p) => `${shades[p.$tone][1]} ${shades[p.$tone][2]} ${shades[p.$tone][2]} ${shades[p.$tone][1]}`};
  span { display: block; height: 32px; border: 1px solid #000; }
`;
const topTools = 'panUp panDown home zones panLeft panRight back snake fit expand scale help tools snap netA netB'.split(' ');
const editTools = 'addPad copyShape ruler area chain erase moveRing moveDot angle extend rotate mirror transfer trim gap merge peakA peakB peakC peakD pick pickBox pickPoly pickNet'.split(' ');
const editTone = (i: number) => (i < 4 ? 'white' : i < 20 ? 'grey' : i === 21 ? 'picked' : 'amber');

const Overview = styled.div`flex: 1; min-height: 0; border-top: 2px solid #2f6e60; border-bottom: 2px solid #b4ecdc;`;
const Coords = styled.output`
  flex: none; height: 44px; padding: 6px 2px; background: ${teal}; border-top: 1px solid #2f6e60; border-bottom: 2px solid #b4ecdc;
  font: bold 15px/15px ${mono}; white-space: pre;
`;

/* ---------- status area ---------- */

const Status = styled.form`
  flex: none; height: 34px; display: flex; background: ${cream}; border: solid #000; border-width: 1px 0 2px; font: bold 12px/32px ${mono};
`;
const StatusTool = styled.button<{ $w: number; $framed?: boolean; $flush?: boolean }>`
  flex: none; width: ${(p) => p.$w}px; padding: ${(p) => (p.$flush ? '3px 5px 3px 0' : '3px')}; background: ${cream}; border: solid ${(p) => (p.$framed ? teal : '#000')};
  border-width: ${(p) => (p.$framed ? '2px 3px' : '0 1px 0 0')}; box-shadow: inset -2px -2px #c4c498, inset 1px 1px #dcdcb4;
  span { display: block; height: 21px; margin: 1px 1px 1px ${(p) => (p.$flush ? 0 : 1)}px; border: 1px solid #000; }
`;
const XYLabel = styled.label`flex: none; width: 46px; padding-left: 1px; white-space: pre;`;
const XYInput = styled.input`
  flex: none; width: 172px; margin-left: 1px; padding: 0 5px; background: ${cream}; border: 1px solid #000; border-width: 0 2px;
  box-shadow: inset 2px 3px #8c8c74, inset -2px -3px #c8c8a0;
`;
const Message = styled.output`flex: 1; padding-left: 2px; border-left: 2px solid #000;`;
const UnitFrame = styled.div`flex: none; width: 80px; padding: 2px 4px 2px 6px; border: solid #000; border-width: 0 1px 0 2px; background: ${teal};`;
const UnitBox = styled.div`
  display: flex; align-items: center; height: 27px; padding: 0 5px;
  border: 2px solid; border-color: #a4ead8 #2c7a66 #2c7a66 #a4ead8;
  select { flex: 1; min-width: 0; appearance: none; background: transparent; font: bold 15px/20px ${mono}; }
  i { width: 12px; height: 7px; background: ${teal}; border: 2px solid; border-color: #a4ead8 #2c7a66 #2c7a66 #a4ead8; }
`;
const Progress = styled.div`
  flex: none; height: 33px; padding: 1px 2px 3px 0; background: #c8f8f4; border-top: 2px solid #5f8484;
  div { height: 27px; border: 1px solid #000; border-left: 0; padding: 1px 2px 1px 0; background: #c8fcfc; }
  span { display: block; height: 23px; background: #b4fefe; border: solid; border-width: 2px 2px 2px 0; border-color: #d8fefe #5a9090 #5a9090; }
`;

/* ---------- taskbar ---------- */

const TaskBar = styled.footer`
  flex: none; height: 40px; display: flex; align-items: center; border-top: 1px solid #6f8bb0; color: #fff; font: 12px/18px ${sans};
  background: linear-gradient(90deg, #0c2a54, #0a2c5c 30%, #123c78 40%, #0a2a58 60%, #0c3468);
`;
const Start = styled.button`width: 56px; background: transparent; display: grid; place-items: center;`;
const Task = styled.button<{ $on?: boolean; $stack?: boolean }>`
  flex: none; width: 58px; height: 38px; margin: 0 0 0 4px; display: grid; place-items: center; border: 1px solid #8ea2bf; border-radius: 3px;
  background: ${(p) => (p.$on ? 'linear-gradient(135deg, #dfe5ee, #9faec4 50%, #8294b0 51%, #a9b6ca)' : 'linear-gradient(135deg, #8e9db5, #4c6282 50%, #2b4468 51%, #3b5478)')};
  ${(p) => p.$stack && css`border-right: 3px double #8ea2bf;`}
`;
const Tray = styled.div`margin-left: auto; display: flex; align-items: center; height: 100%; gap: 8px;`;
const TrayTime = styled.time`width: 66px; margin-left: 2px; text-align: center;`;
const ShowDesktop = styled.button`width: 14px; height: 38px; border: 1px solid #8196b4; background: linear-gradient(#5b7294, #1b365e);`;

const disc = (
  <svg width="34" height="30" viewBox="0 0 34 30">
    <ellipse cx="19" cy="18" rx="13" ry="11" fill="#0a3c44" /><ellipse cx="19" cy="16" rx="12" ry="10" fill="#1a9a96" />
    <path d="M9 14q2-7 10-7M29 17q-2 7-10 7" stroke="#7fe0d4" strokeWidth="2" fill="none" />
    <ellipse cx="19" cy="15" rx="7" ry="5" fill="#147a7c" stroke="#d8d850" strokeWidth="2" />
    <circle cx="19" cy="14" r="2" fill="#f4f480" /><path d="M2 4l8-2 4 4-7 4-5-2z" fill="#2ac8c0" /><path d="M7 22l6 5 12-1" stroke="#a8c8c8" fill="none" strokeWidth="2" />
  </svg>
);
const taskIcons: { label: string; icon: React.ReactNode; on?: boolean; stack?: boolean }[] = [
  { label: 'Shell', icon: <svg width="34" height="30" viewBox="0 0 34 30"><path d="M17 29L7 24Q-1 13 7 7q3-6 10-6t10 6q8 6 0 17z" fill="#ffcf6a" /><path d="M17 27L5 14M17 27L9 6M17 27V2M17 27l8-21M17 27l12-13" stroke="#d58a2a" /><path d="M20 11l3 6 6 1-4 4 1 6-6-3-6 3 1-6-4-4 6-1z" fill="#ee8a2c" stroke="#c0631c" /></svg> },
  { label: 'Notes', icon: <svg width="26" height="30" viewBox="0 0 26 30"><path d="M1 1h24v28H1z" fill="#e9f8ff" /><path d="M3 5h20M3 9h20M3 13h20M3 17h20M3 21h20M3 25h20" stroke="#2c9fc8" strokeWidth="2" /></svg> },
  { label: 'G', icon: <svg width="30" height="30" viewBox="0 0 30 30"><path d="M27 1q-1 6-9 6-8 1-8 9 0 7 7 7 4 0 4-4h-6l2-4h10q0 13-11 13Q3 28 3 17 3 3 17 4q6 0 10-3z" fill="#e03424" stroke="#901408" /></svg> },
  { label: 'Save', icon: <svg width="32" height="32" viewBox="0 0 32 32"><path d="M1 1h27l3 3v27H1z" fill="#2730c4" /><path d="M9 1h14v10H9z" fill="#dde" /><path d="M17 2h4v7h-4z" fill="#2730c4" /><path d="M5 15h22v16H5z" fill="#fff" /><path d="M7 19h18M7 23h12M7 28h10" stroke="#c33" /></svg> },
  { label: 'P', icon: <svg width="32" height="32" viewBox="0 0 32 32"><path d="M8 4q20-7 22 6 0 10-11 11v5h-6V10h-3L7 29H2z" fill="#0a9a44" /><path d="M13 10v15M10 12h3M9 16h4M9 20h4" stroke="#075" /></svg> },
  { label: 'Wing', icon: <svg width="30" height="30" viewBox="0 0 30 30"><rect x="1" width="28" height="30" rx="6" fill="#1593f4" /><path d="M8 4q3 4 8 6 6 4 6 9 0 3-3 5l1 1-4 4q1-5-2-7-5-7-6-18z" fill="#fff" /></svg> },
  { label: 'Word', stack: true, icon: <svg width="32" height="32" viewBox="0 0 32 32"><path d="M10 2l18 2v26l-18-2z" fill="#f4f8ff" stroke="#3a5ea8" /><path d="M17 8h9M17 12h9M17 16h9M13 21h13M13 25h13" stroke="#5a7ab8" strokeWidth="2" /><path d="M3 6l14 2v13L3 19z" fill="#dbe6f8" stroke="#2a4e98" /><path d="M6 10l2 7 2-6 2 6 2-6" stroke="#1c3f8e" strokeWidth="2" fill="none" /></svg> },
  { label: 'Excel', stack: true, icon: <svg width="32" height="32" viewBox="0 0 32 32"><path d="M7 1h22v29H7z" fill="#eef6e8" stroke="#3a7a2c" /><path d="M18 14h9v4h-9zM18 20h9v4h-9zM10 24h6v4h-6zM18 25h9v3h-9z" fill="#6ab04c" /><path d="M3 7l14 2v14L3 21z" fill="#dcefd4" stroke="#2c6e20" /><path d="M6 11l8 8M13 11l-6 8" stroke="#1f6a18" strokeWidth="3" /></svg> },
  { label: 'Disc', icon: disc },
  { label: 'X', on: true, stack: true, icon: <svg width="34" height="30" viewBox="0 0 34 30"><path d="M30 1L5 29" stroke="#fff" strokeWidth="4" /><path d="M3 1h7l21 28h-7z" fill="#8a1a8c" stroke="#fff" /><path d="M30 1L5 29" stroke="#301030" strokeWidth="2" /></svg> },
  { label: 'Disc 2', icon: disc },
];

const Logo = () => (
  <svg width="156" height="50" viewBox="0 0 156 50" aria-label="Frontline">
    <path d="M5 12l18-1v3H5zM2 19l18-1v3H2zM0 26l17-1v3H0zM0 32l16-1v3H0z" fill="#f01010" />
    <path d="M14 10h8l-1 4h-8zM12 17h8l-1 4h-8zM9 24h8l-1 4H9zM8 30h8l-1 4H8z" fill="#f01010" />
    <g fill="#06068c" fontFamily='"Liberation Sans", Arial, sans-serif' fontWeight="bold" fontStyle="italic" fontSize="32">
      <text x="21" y="35">Fr</text>
      <text x="73" y="35">ntline</text>
    </g>
    <circle cx="63" cy="27" r="8" fill="#dff" stroke="#06068c" strokeWidth="2" />
    <path d="M63 22l4 5-4 5-4-5z" fill="#f01010" />
  </svg>
);

export default function App() {
  return (
    <Screen>
      <Global />
      <AppWindow>
        <TitleBar>
          {[36.500, 40.500, 48, 52.500, 56.500, 60.500, 68, 76.500, 80.500].map((x, i) => (
            <Blur key={x} $x={x} $c={i % 3 ? '#9fc0ea' : '#8fd0c8'} />
          ))}
          <Blur $x={72.500} $c="#3c8cd8" />
          <Blur $x={88} $c="#c82838" />
          <MiniX><svg width="6" height="11"><path d="M0 3l4 6M4 3L0 9" stroke="#880" strokeWidth="2" /></svg></MiniX>
          <Caption>Graphic Editor 9.07b2 (00@HY-HYCAM-PC411 - Windows, pid:2988)</Caption>
          <Controls>
            <Control $w={30} aria-label="Minimize"><svg width="11" height="4"><path d="M0 0h11v4H0z" fill="#fff" /></svg></Control>
            <Control $w={27} aria-label="Restore"><svg width="11" height="8"><path d="M1 0v6h9V0" fill="none" stroke="#fff" strokeWidth="3" /></svg></Control>
            <Control $w={47} aria-label="Close"><svg width="10" height="8"><path d="M1 0l8 7M9 0L1 7" stroke="#fff" strokeWidth="2" /></svg></Control>
          </Controls>
        </TitleBar>
        <Header>
          <MenuBar>
            <button><u>F</u>ile</button>
            <button><u>E</u>dit</button>
            <button><u>A</u>ctions</button>
            <button>O<u>p</u>tions</button>
            <button>Analysis</button>
            <button>DFM</button>
            <button><u>S</u>tep</button>
            <button><u>R</u>out</button>
            <button><u>W</u>indows</button>
            <button>Help</button>
          </MenuBar>
          <Brand>
            <Logo />
            <Product><strong>Genesis 2000</strong><em>Graphic Editor</em></Product>
            <Clock>16 Mar 2023<br />06:17 PM<Pause /></Clock>
          </Brand>
        </Header>
        <Work>
          <Side>
            <Info>Job : 6s0391jta0</Info>
            <Info>Step: cam</Info>
            <MatrixFrame><MatrixButton>Job Matrix ...</MatrixButton></MatrixFrame>
            <ListArea>
              <Layers>
                {layers.map(({ name, color, gap }) => (
                  <LayerRow key={name} $gap={gap}>
                    <Tick type="checkbox" id={`layer-${name}`} $on={name === 'drl'} />
                    <Mark $on={name === 'drl'}>
                      {name === 'drl' && <svg width="14" height="14"><path d="M2 2h8L8 4l5 5-3 3-5-5-3 3z" fill="#fff" /></svg>}
                    </Mark>
                    <LayerName $c={color} htmlFor={`layer-${name}`}>
                      {name}
                      {handed.includes(name) && <Hand />}
                      {name === 'drl' && <svg width="5" height="5"><path d="M0 0h5v5H0zM0 2.500h5M2.500 0v5" fill="none" stroke="#000" /></svg>}
                    </LayerName>
                  </LayerRow>
                ))}
              </Layers>
              <Gutter />
              <Scroll>
                <ScrollEnd aria-label="Scroll up"><svg width="11" height="11"><path d="M5 1l5 9H1z" fill={teal} stroke="#a4ead8" /></svg></ScrollEnd>
                <Thumb />
                <ScrollEnd aria-label="Scroll down"><svg width="11" height="11"><path d="M1 1h9l-5 9z" fill={teal} stroke="#a4ead8" /></svg></ScrollEnd>
              </Scroll>
            </ListArea>
            <SelectedBar>Selected : 1</SelectedBar>
          </Side>
          <Canvas>
            <Board />
            <Popview />
          </Canvas>
          <Tools>
            <ToolGrid $frame="#b4ecdc">
              {topTools.map((g, i) => (
                <Tool key={g} $tone={i > 13 ? 'red' : 'aqua'} aria-label={g}><span><Glyph name={g} /></span></Tool>
              ))}
            </ToolGrid>
            <ToolGrid $frame="#808080">
              {editTools.map((g, i) => (
                <Tool key={g} $tone={editTone(i)} aria-label={g}><span><Glyph name={g} /></span></Tool>
              ))}
            </ToolGrid>
            <Overview>
              <svg width="100%" height="100%" viewBox="1750 488 160 432" preserveAspectRatio="xMidYMid slice" aria-label="Panel overview">
                <path d="M1911 635.500h-160.500v139h160.500" fill="none" stroke="#4c8c24" />
                <path d="M1759 658h151v90h-151z" fill="#f00" />
                <path d="M1765 683h138v42" fill="none" stroke="#4ce0e0" strokeWidth="2" />
                <path d="M1765 682v44" stroke="#4ce0e0" strokeWidth="2" />
                <path d="M1765 726h138" stroke="#b8a8a8" strokeWidth="2" />
                <path d="M1764 724h4v3h-4zM1900 723h4v4h-4z" fill="#0ff" />
                <path d="M1762 723l6 6M1768 723l-6 6" stroke="#ccc" />
              </svg>
            </Overview>
            <Coords>{'X = 7.256110"\nY = 1.042866"'}</Coords>
          </Tools>
        </Work>
        <Status onSubmit={(e) => e.preventDefault()}>
          <StatusTool type="button" $w={25} $flush aria-label="Diagonal"><span><Glyph name="diag" /></span></StatusTool>
          <StatusTool type="button" $w={32} aria-label="Slope"><span><Glyph name="slope" /></span></StatusTool>
          <StatusTool type="button" $w={31} $framed aria-label="Grid"><span><Glyph name="grid" /></span></StatusTool>
          <XYLabel htmlFor="xy">X Y :</XYLabel>
          <XYInput id="xy" defaultValue="|" />
          <StatusTool type="button" $w={32} $framed aria-label="Alert"><span><Glyph name="bang" /></span></StatusTool>
          <Message>&lt;M1&gt; - Select first rectangle corner</Message>
          <UnitFrame>
            <UnitBox>
              <select aria-label="Units" defaultValue="Inch"><option>Inch</option><option>MM</option></select>
              <i />
            </UnitBox>
          </UnitFrame>
        </Status>
        <Progress><div><span /></div></Progress>
      </AppWindow>
      <TaskBar>
        <Start aria-label="Start">
          <svg width="38" height="38" viewBox="0 0 38 38">
            <circle cx="19" cy="19" r="18" fill="#1c5c94" stroke="#8fc4e4" /><ellipse cx="19" cy="12" rx="14" ry="9" fill="#6fb0d8" opacity="0.6" />
            <path d="M10 13q4-3 8 0l-1 6q-4-3-8 0z" fill="#f06a2c" /><path d="M19 13q5 3 9 0l-2 7q-4 2-8-1z" fill="#8cc83c" /><path d="M9 21q4-3 8 0l-1 7q-4-3-8 0z" fill="#4ca8f0" /><path d="M18 21q4 3 8 0l-2 7q-3 2-7 0z" fill="#fcd03c" />
          </svg>
        </Start>
        {taskIcons.map((t) => (
          <Task key={t.label} $on={t.on} $stack={t.stack} aria-label={t.label}>{t.icon}</Task>
        ))}
        <Tray>
          <svg width="16" height="16" viewBox="0 0 16 16"><path d="M1 7h14v8H1z" fill="#cfcfcf" /><path d="M2 9h12M2 11h12M4 13h8" stroke="#666" strokeDasharray="1 1" /><path d="M6 7q0-4 3-4t5-2" stroke="#999" fill="none" /></svg>
          <svg width="16" height="16" viewBox="0 0 16 16"><circle cx="8" cy="8" r="7" fill="#1c2cc0" stroke="#e8ecff" /><path d="M5 6q0-3 3-3t3 3-3 3v1M8 12v2" stroke="#fff" strokeWidth="2" fill="none" /></svg>
          <svg width="10" height="20" viewBox="0 0 10 20"><path d="M3 2h6v4H3zM1 4h5v3H1z" fill="#123" stroke="#fff" /><path d="M2 15h5l-2 3z" fill="#fff" /></svg>
          <svg width="9" height="6" viewBox="0 0 9 6"><path d="M0 5l4-4 4 4z" fill="#fff" /></svg>
          <svg width="18" height="18" viewBox="0 0 18 18"><path d="M3 2v14M4 3h5v1h5v6H9V9H4z" fill="#fff" stroke="#fff" /><circle cx="12" cy="12" r="5" fill="#d82818" /><path d="M10 10l4 4M14 10l-4 4" stroke="#fff" strokeWidth="2" /></svg>
          <svg width="16" height="16" viewBox="0 0 16 16"><path d="M1 6h3l4-4v12l-4-4H1z" fill="#fff" /><path d="M10 5q2 3 0 6M12 3q4 5 0 10" stroke="#fff" fill="none" /></svg>
          <svg width="18" height="18" viewBox="0 0 18 18"><path d="M6 5h10v8H6zM8 16h8M11 13v3M2 2v4h4V2M4 6v7h2" fill="none" stroke="#fff" strokeWidth="1.500" /></svg>
          <TrayTime>18:37<br />2023/3/16</TrayTime>
          <ShowDesktop aria-label="Show desktop" />
        </Tray>
      </TaskBar>
    </Screen>
  );
}
